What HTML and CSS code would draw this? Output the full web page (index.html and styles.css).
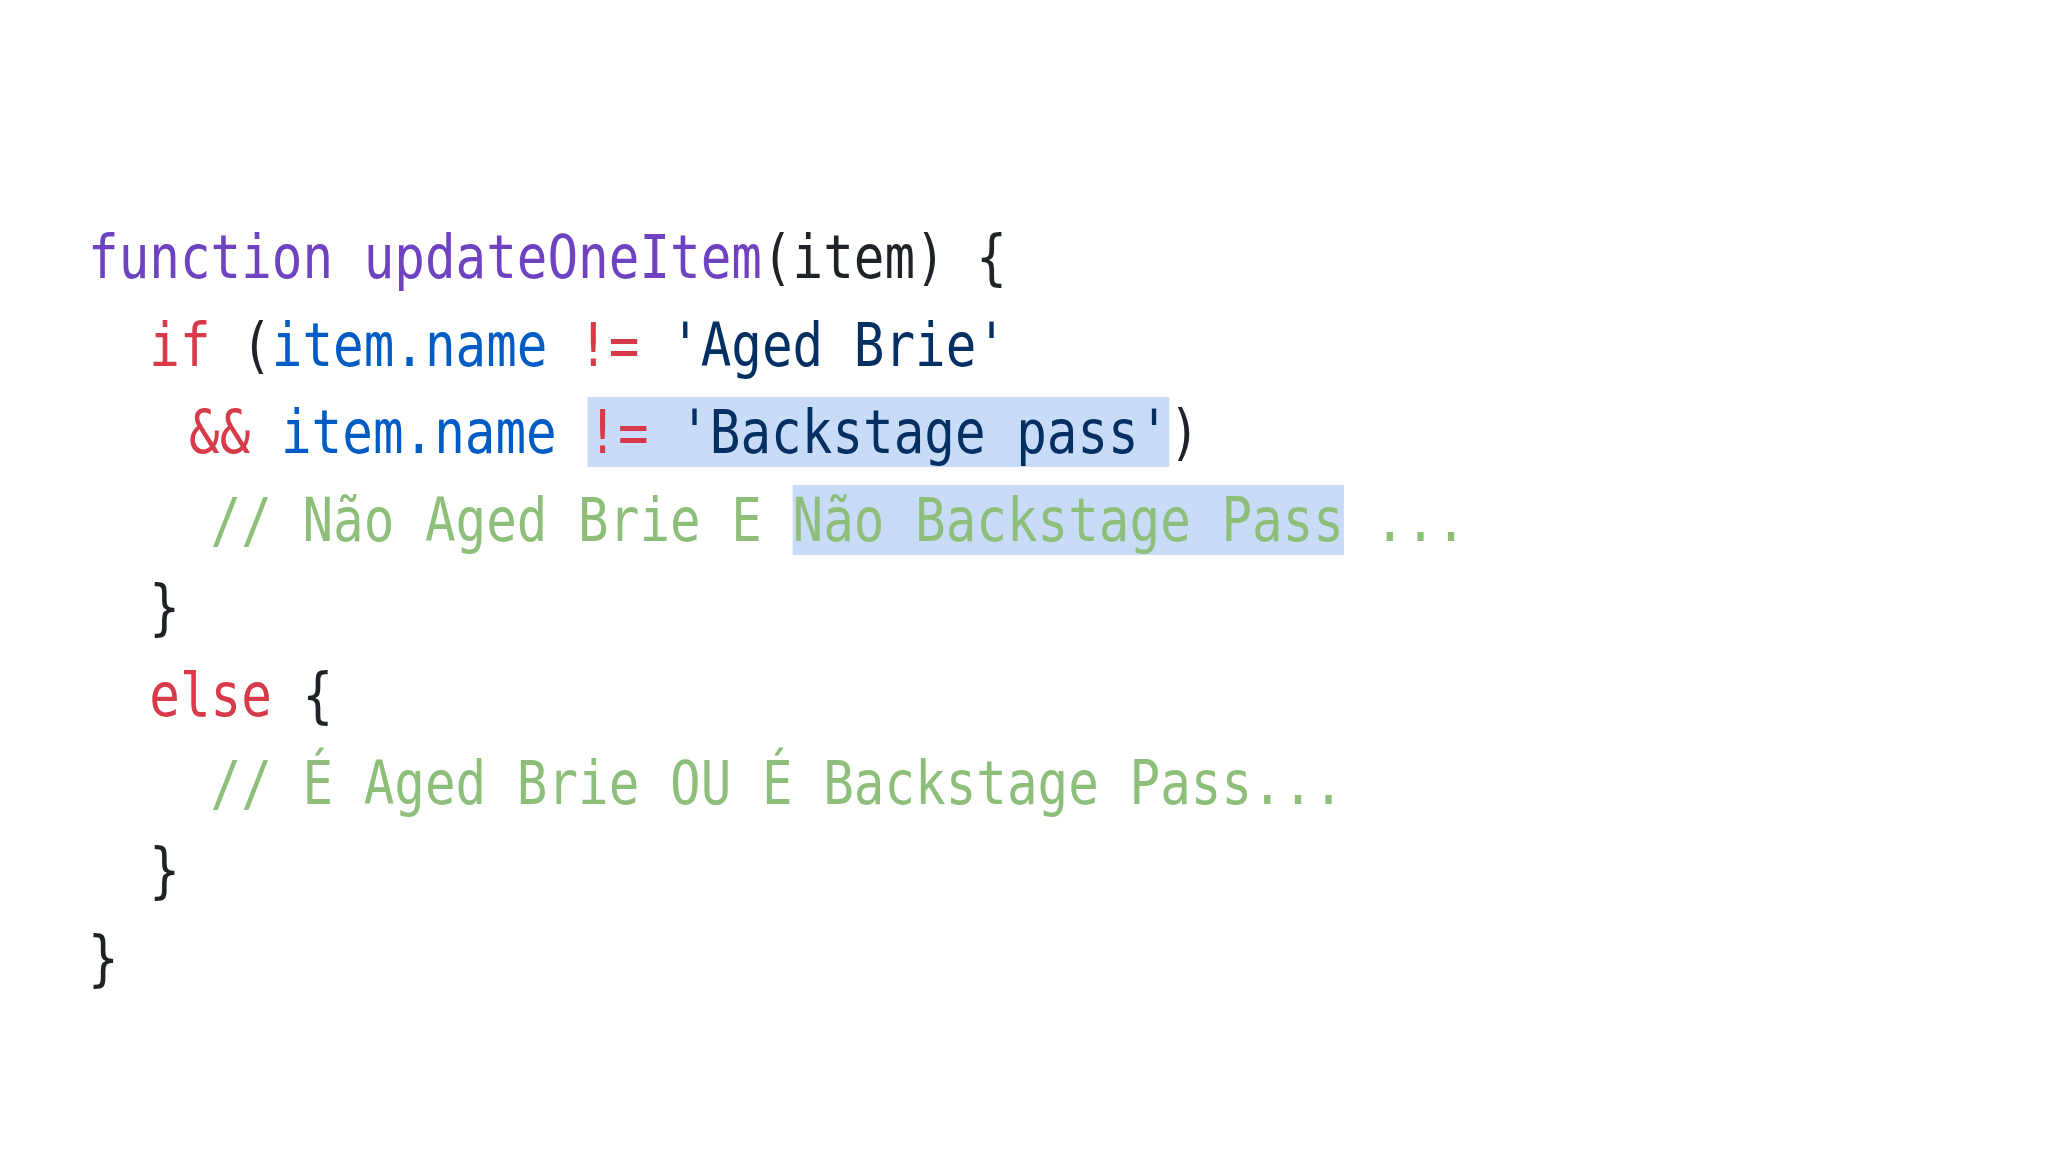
FILE: index.html
```html
<!DOCTYPE html>
<html lang="pt">
<head>
<meta charset="utf-8">
<title>updateOneItem</title>
<link rel="stylesheet" href="styles.css">
</head>
<body>
<main class="slide">
<pre class="code"><div class="line"><span class="kw-fn">function updateOneItem</span><span class="plain">(item) {</span></div><div class="line ind-2"><span class="kw">if</span> <span class="plain">(</span><span class="prop">item.name</span> <span class="kw">!=</span> <span class="str">'Aged Brie'</span></div><div class="line ind-3"><span class="kw">&amp;&amp;</span> <span class="prop">item.name</span> <span class="sel"><span class="kw">!=</span> <span class="str">'Backstage pass'</span></span><span class="plain">)</span></div><div class="line ind-4"><span class="cm">// Não Aged Brie E <span class="sel">Não Backstage Pass</span> ...</span></div><div class="line ind-2"><span class="plain">}</span></div><div class="line ind-2"><span class="kw">else</span> <span class="plain">{</span></div><div class="line ind-4"><span class="cm">// É Aged Brie OU É Backstage Pass...</span></div><div class="line ind-2"><span class="plain">}</span></div><div class="line"><span class="plain">}</span></div></pre>
</main>
</body>
</html>
```
FILE: styles.css
```css
html, body {
  margin: 0;
  padding: 0;
  background: #ffffff;
}

.slide {
  width: 2048px;
  height: 1152px;
  box-sizing: border-box;
  padding: 214px 0 0 88px;
  background: #ffffff;
  overflow: hidden;
}

.code {
  margin: 0;
  font-family: "DejaVu Sans Mono", "Liberation Mono", monospace;
  font-size: 60px;
  line-height: 87.6px;
  white-space: pre;
  color: #24292e;
  transform: scaleX(0.848);
  transform-origin: left top;
}

.line {
  display: block;
}

.ind-2 { padding-left: 2ch; }
.ind-3 { padding-left: 3.3ch; }
.ind-4 { padding-left: 4ch; }

.kw-fn { color: #6f42c1; }
.plain { color: #1f2328; }
.kw { color: #d73a49; }
.prop { color: #005cc5; }
.str { color: #032f62; }
.cm { color: #8dbf7b; }

.sel {
  background: #c8dbf7;
}
```
